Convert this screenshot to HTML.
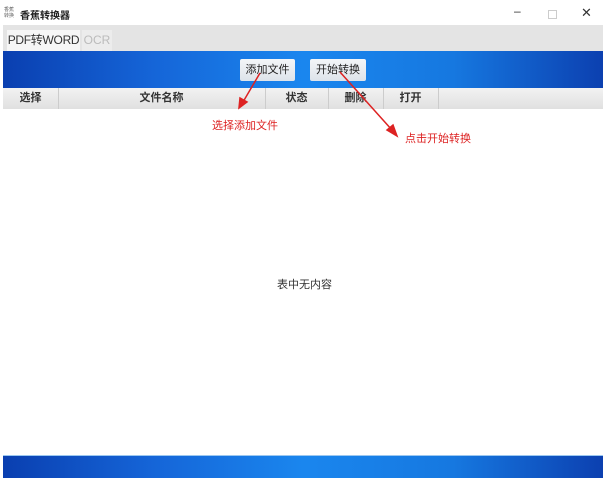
<!DOCTYPE html><html><head><meta charset="utf-8"><style>
body{margin:0;width:605px;height:478px;background:#fff;position:relative;overflow:hidden;font-family:"Liberation Sans","Noto Sans CJK SC",sans-serif;font-size:11px;color:#222}
.a{position:absolute;white-space:nowrap}
.blue{background:linear-gradient(90deg,#0a3fb0 0%,#1565d8 25%,#1a86ee 50%,#1678e0 75%,#0c40b0 100%)}
.btn{position:absolute;top:59px;height:22px;width:55px;background:linear-gradient(#f4f6f8,#dde3ea);border-radius:2px;text-align:center;line-height:22px;font-size:11px;color:#222;white-space:nowrap}
.h{position:absolute;top:88px;height:21px;line-height:21px;text-align:center;font-weight:bold;font-size:11px;border-right:1px solid #ccc;color:#333}
.r{color:#d22;font-size:11px;position:absolute;white-space:nowrap}
</style></head><body>
<div class="a" style="left:4px;top:7px;font-size:5px;line-height:6px;color:#666">香蕉<br>转换</div>
<div class="a" style="left:20px;top:7px;font-size:10px;font-weight:bold">香蕉转换器</div>
<div class="a" style="left:514px;top:4px;font-size:12px;color:#333">–</div>
<div class="a" style="left:548px;top:10px;width:7px;height:7px;border:1px solid #ccc"></div>
<div class="a" style="left:581px;top:5px;font-size:13px;color:#333">✕</div>
<div class="a" style="left:3px;top:25px;width:600px;height:26px;background:#e4e4e4"></div>
<div class="a" style="left:7px;top:30px;width:73px;height:21px;background:#f6f6f6;line-height:21px;text-align:center;font-size:12px;color:#333;letter-spacing:-0.3px">PDF转WORD</div>
<div class="a" style="left:82px;top:30px;width:30px;height:21px;background:#ececec;line-height:21px;text-align:center;font-size:12px;color:#bbb">OCR</div>
<div class="a blue" style="left:3px;top:51px;width:600px;height:37px"></div>
<div class="btn" style="left:240px">添加文件</div>
<div class="btn" style="left:310px;width:56px">开始转换</div>
<div class="a" style="left:3px;top:88px;width:600px;height:21px;background:linear-gradient(#f2f2f2,#e0e0e0)"></div>
<div class="h" style="left:3px;width:55px">选择</div>
<div class="h" style="left:58px;width:207px">文件名称</div>
<div class="h" style="left:265px;width:63px">状态</div>
<div class="h" style="left:328px;width:55px">删除</div>
<div class="h" style="left:383px;width:55px">打开</div>
<svg class="a" style="left:0;top:0" width="605" height="478"><g stroke="#d22" stroke-width="1.5" fill="#d22">
<line x1="260" y1="73" x2="243" y2="102"/><polygon points="239,108 240,98 247,102"/>
<line x1="340" y1="72" x2="392" y2="130"/><polygon points="397,136 387,130 393,125"/></g></svg>
<div class="r" style="left:212px;top:117px">选择添加文件</div>
<div class="r" style="left:405px;top:130px">点击开始转换</div>
<div class="a" style="left:277px;top:276px;font-size:11px;color:#333">表中无内容</div>
<div class="a" style="left:3px;top:455px;width:600px;height:1px;background:#9cc8f0"></div>
<div class="a blue" style="left:3px;top:456px;width:600px;height:22px"></div>
</body></html>
